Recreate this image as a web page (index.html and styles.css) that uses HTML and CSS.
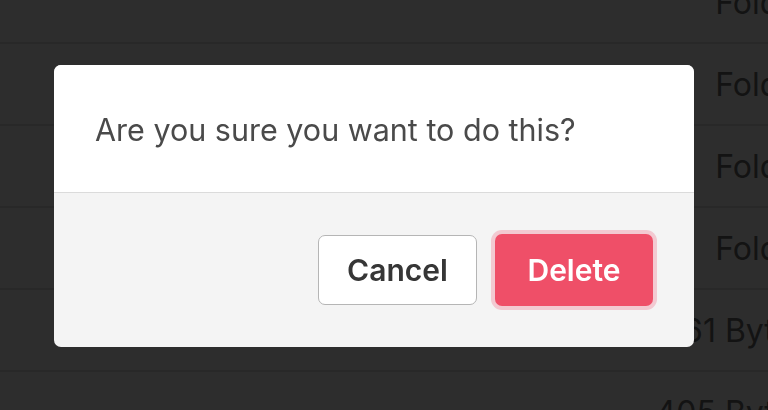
FILE: index.html
```html
<!DOCTYPE html>
<html>
<head>
<meta charset="utf-8">
<link rel="stylesheet" href="styles.css">
</head>
<body>
<div class="page">
  <div class="rows">
    <div class="row"><span class="cell">Folder</span></div>
    <div class="row"><span class="cell">Folder</span></div>
    <div class="row"><span class="cell">Folder</span></div>
    <div class="row"><span class="cell">Folder</span></div>
    <div class="row"><span class="cell">61 Bytes</span></div>
    <div class="row"><span class="cell">405 Bytes</span></div>
  </div>
</div>
<div class="modal">
  <div class="backdrop"></div>
  <div class="card">
    <div class="card-body">Are you sure you want to do this?</div>
    <div class="card-foot">
      <button class="btn btn-cancel">Cancel</button>
      <button class="btn btn-delete">Delete</button>
    </div>
  </div>
</div>
</body>
</html>
```
FILE: styles.css
```css
html, body {
  margin: 0;
  padding: 0;
  height: 100%;
  overflow: hidden;
  background: #ffffff;
  font-family: Inter, "Liberation Sans", sans-serif;
}
.page {
  width: 830px;
}
.rows {
  margin-top: -38px;
}
.row {
  box-sizing: border-box;
  height: 82px;
  border-bottom: 2px solid #dbdbdb;
  display: flex;
  align-items: center;
  justify-content: flex-end;
  padding-right: 20px;
}
.cell {
  font-size: 32px;
  color: #4a4a4a;
}
.modal {
  position: fixed;
  inset: 0;
  display: flex;
  align-items: center;
  justify-content: center;
  padding: 2px 20px 0 0;
}
.backdrop {
  position: absolute;
  inset: 0;
  background: rgba(10, 10, 10, 0.86);
}
.card {
  position: relative;
  width: 640px;
  border-radius: 7px;
  overflow: hidden;
  background: #f4f4f4;
}
.card-body {
  background: #ffffff;
  color: #4a4a4a;
  font-size: 30.5px;
  line-height: 44px;
  padding: 43px 41px 40px;
  border-bottom: 1px solid #dbdbdb;
}
.card-foot {
  height: 154px;
  box-sizing: border-box;
  display: flex;
  align-items: center;
  justify-content: flex-end;
  gap: 18px;
  padding: 0 41px;
}
.btn {
  box-sizing: border-box;
  font-family: Inter, "Liberation Sans", sans-serif;
  font-size: 30px;
  font-weight: 600;
  border-radius: 7px;
  cursor: pointer;
  padding: 0;
}
.btn-cancel {
  width: 159px;
  height: 70px;
  background: #ffffff;
  border: 1px solid #b5b5b5;
  color: #363636;
}
.btn-delete {
  width: 158px;
  height: 72px;
  background: #ef4f68;
  border: none;
  color: #ffffff;
  box-shadow: 0 0 0 4px rgba(241, 70, 104, 0.25);
}
```
